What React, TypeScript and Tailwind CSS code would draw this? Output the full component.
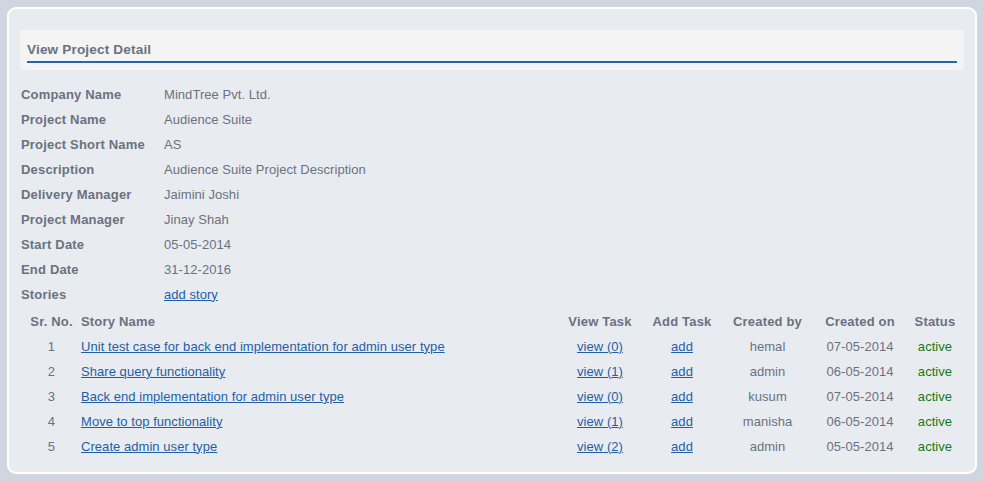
const details: [string, string][] = [
  ["Company Name", "MindTree Pvt. Ltd."],
  ["Project Name", "Audience Suite"],
  ["Project Short Name", "AS"],
  ["Description", "Audience Suite Project Description"],
  ["Delivery Manager", "Jaimini Joshi"],
  ["Project Manager", "Jinay Shah"],
  ["Start Date", "05-05-2014"],
  ["End Date", "31-12-2016"],
];

const stories = [
  { no: 1, name: "Unit test case for back end implementation for admin user type", tasks: 0, by: "hemal", on: "07-05-2014" },
  { no: 2, name: "Share query functionality", tasks: 1, by: "admin", on: "06-05-2014" },
  { no: 3, name: "Back end implementation for admin user type", tasks: 0, by: "kusum", on: "07-05-2014" },
  { no: 4, name: "Move to top functionality", tasks: 1, by: "manisha", on: "06-05-2014" },
  { no: 5, name: "Create admin user type", tasks: 2, by: "admin", on: "05-05-2014" },
];

const cols = "grid grid-cols-[59px_479px_80px_84px_87px_98px_52px] h-[25px] items-center";

export default function App() {
  return (
    <main className="min-h-[481px] bg-[#cfd6e0] pt-[7px] pl-[7px] font-['Liberation_Sans',Arial,sans-serif] text-[13px] tracking-[0.05px] text-[#6b7180]">
      <section className="h-[467px] w-[970px] rounded-[9px] border-2 border-white bg-[#e8ecf1] px-[11px] pt-[21px]">
        <div className="h-[40px] rounded-[4px] bg-[#f4f4f4] px-[7px] pt-[12px]">
          <h1 className="border-b-2 border-[#2067b0] pb-[3px] text-[13.6px] font-bold leading-[16px] tracking-[0.15px]">
            View Project Detail
          </h1>
        </div>

        <div className="mt-[12px] pl-[1px]">
          {details.map(([label, value]) => (
            <div key={label} className="flex h-[25px] items-center">
              <span className="w-[143px] font-bold tracking-[0.18px]">{label}</span>
              <span>{value}</span>
            </div>
          ))}
          <div className="flex h-[25px] items-center">
            <span className="w-[143px] font-bold tracking-[0.18px]">Stories</span>
            <a href="#" className="text-[#1f5ea6] underline">
              add story
            </a>
          </div>
        </div>

        <div className="ml-[2px] mt-[2px]">
          <div className={`${cols} font-bold tracking-[0.18px]`}>
            <span className="text-center">Sr. No.</span>
            <span>Story Name</span>
            <span className="text-center">View Task</span>
            <span className="text-center">Add Task</span>
            <span className="text-center">Created by</span>
            <span className="text-center">Created on</span>
            <span className="text-center">Status</span>
          </div>
          {stories.map((s) => (
            <div key={s.no} className={cols}>
              <span className="text-center">{s.no}</span>
              <a href="#" className="w-fit text-[#1f5ea6] underline">
                {s.name}
              </a>
              <a href="#" className="text-center text-[#1f5ea6] underline">
                view ({s.tasks})
              </a>
              <a href="#" className="text-center text-[#1f5ea6] underline">
                add
              </a>
              <span className="text-center">{s.by}</span>
              <span className="text-center">{s.on}</span>
              <span className="text-center text-[#157a12]">active</span>
            </div>
          ))}
        </div>
      </section>
    </main>
  );
}
